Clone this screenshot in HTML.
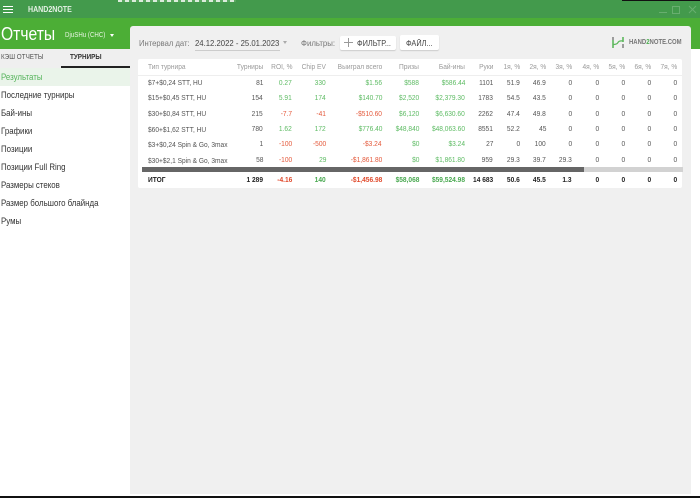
<!DOCTYPE html>
<html><head><meta charset="utf-8">
<style>
html,body{margin:0;padding:0;background:#fff;}
#p{position:relative;width:700px;height:498px;overflow:hidden;background:#fff;font-family:"Liberation Sans","Noto Sans CJK SC",sans-serif;color:#444;}
.a{position:absolute;white-space:nowrap;}
.s{transform-origin:0 50%;}
.c{position:absolute;white-space:nowrap;font-size:7.6px;line-height:10px;text-align:right;transform:scaleX(.87);transform-origin:100% 50%;}
.l{text-align:left;transform-origin:0 50%;left:148px;}
.h{color:#9a9a9a;}
.g{color:#5dbb63;}
.r{color:#e4593b;}
.d{color:#555;}
.b{font-weight:bold;color:#222;}
.bg{font-weight:bold;color:#48a84f;}
.br{font-weight:bold;color:#e04a2c;}
.n{position:absolute;left:1px;font-size:9px;line-height:12px;color:#333;white-space:nowrap;transform:scaleX(.875);transform-origin:0 50%;}
</style></head><body><div id="p">
<div class="a" style="left:0;top:0;width:700px;height:18px;background:#439a4c;"></div>
<div class="a" style="left:0;top:18px;width:700px;height:31px;background:#4cae36;"></div>
<div class="a" style="left:118px;top:0;width:118px;height:2px;background:repeating-linear-gradient(90deg,#dcecdc 0 4px,#5aa860 4px 7px);"></div>
<div class="a" style="left:622px;top:0;width:78px;height:1px;background:#111;"></div>
<div class="a" style="left:3px;top:6px;width:10px;height:1.4px;background:#fff;"></div>
<div class="a" style="left:3px;top:9px;width:10px;height:1.4px;background:#fff;"></div>
<div class="a" style="left:3px;top:12px;width:10px;height:1.4px;background:#fff;"></div>
<div class="a s" style="left:28px;top:4px;font-size:8px;line-height:11px;color:#e6f2e6;font-weight:bold;transform:scaleX(.88);">HAND2NOTE</div>
<div class="a" style="left:659px;top:12px;width:8px;height:1px;background:#68ae6f;"></div>
<div class="a" style="left:672px;top:6px;width:6px;height:6px;border:1px solid #68ae6f;"></div>
<svg class="a" style="left:688px;top:5px;" width="9" height="9"><path d="M1 1L8 8M8 1L1 8" stroke="#68ae6f" stroke-width="1" fill="none"/></svg>
<div class="a s" style="left:1px;top:24px;font-size:18px;line-height:20px;color:#fff;transform:scaleX(.87);">Отчеты</div>
<div class="a s" style="left:65px;top:30px;font-size:7.5px;line-height:10px;color:#e8f5e3;transform:scaleX(.82);">DjuSHu (CHC)</div>
<div class="a" style="left:110px;top:34px;width:0;height:0;border-left:2.5px solid transparent;border-right:2.5px solid transparent;border-top:3px solid #fff;"></div>
<div class="a" style="left:0;top:49px;width:130px;height:19px;background:#efefef;"></div>
<div class="a s" style="left:1px;top:52px;font-size:7.2px;line-height:10px;color:#555;transform:scaleX(.88);">КЭШ ОТЧЕТЫ</div>
<div class="a s" style="left:70px;top:52px;font-size:7.2px;line-height:10px;color:#333;font-weight:bold;transform:scaleX(.88);">ТУРНИРЫ</div>
<div class="a" style="left:61px;top:66px;width:69px;height:2px;background:#222;"></div>
<div class="a" style="left:0;top:68px;width:130px;height:18px;background:#eaf4ea;"></div>
<div class="n" style="top:71px;color:#58b55e;">Результаты</div>
<div class="n" style="top:89px;">Последние турниры</div>
<div class="n" style="top:107px;">Бай-ины</div>
<div class="n" style="top:125px;">Графики</div>
<div class="n" style="top:143px;">Позиции</div>
<div class="n" style="top:161px;">Позиции Full Ring</div>
<div class="n" style="top:179px;">Размеры стеков</div>
<div class="n" style="top:197px;">Размер большого блайнда</div>
<div class="n" style="top:215px;">Румы</div>
<div class="a" style="left:130px;top:26px;width:561px;height:468px;background:#f0f0f0;border-radius:3px 3px 0 0;"></div>
<div class="a s" style="left:139px;top:37px;font-size:8.5px;line-height:12px;color:#777;transform:scaleX(.9);">Интервал дат:</div>
<div class="a s" style="left:195px;top:37px;font-size:8.5px;line-height:12px;color:#444;transform:scaleX(.91);">24.12.2022 - 25.01.2023</div>
<div class="a" style="left:195px;top:50px;width:85px;height:1px;background:#ccc;"></div>
<div class="a" style="left:283px;top:41px;width:0;height:0;border-left:2.5px solid transparent;border-right:2.5px solid transparent;border-top:3px solid #aaa;"></div>
<div class="a s" style="left:301px;top:37px;font-size:8.5px;line-height:12px;color:#777;transform:scaleX(.92);">Фильтры:</div>
<div class="a" style="left:340px;top:36px;width:56px;height:14px;background:#fff;border-radius:2px;box-shadow:0 1px 1px #ccc;"></div>
<svg class="a" style="left:344px;top:38px;" width="9" height="9"><path d="M4.5 0V9M0 4.5H9" stroke="#999" stroke-width="1" fill="none"/></svg>
<div class="a s" style="left:357px;top:38px;font-size:8px;line-height:11px;color:#444;transform:scaleX(.92);">ФИЛЬТР...</div>
<div class="a" style="left:400px;top:35px;width:39px;height:15px;background:#fff;border-radius:2px;box-shadow:0 1px 1px #ccc;"></div>
<div class="a s" style="left:406px;top:38px;font-size:8px;line-height:11px;color:#444;transform:scaleX(.92);">ФАЙЛ...</div>
<svg class="a" style="left:611px;top:36px;" width="14" height="13"><path d="M2 1V4" stroke="#888" stroke-width="1.6" fill="none"/><path d="M2 4V12" stroke="#5cb85c" stroke-width="1.6" fill="none"/><path d="M12 1V6" stroke="#5cb85c" stroke-width="1.6" fill="none"/><path d="M12 8V12" stroke="#888" stroke-width="1.6" fill="none"/><path d="M2 8.5Q6 8.5 7 6.5T12 5" stroke="#5cb85c" stroke-width="1.3" fill="none"/></svg>
<div class="a s" style="left:629px;top:38px;font-size:7px;line-height:10px;font-weight:bold;color:#777;transform:scaleX(.85);">HAND<span style="color:#4cb050">2</span>NOTE.COM</div>
<div class="a" style="left:138px;top:59px;width:544px;height:129px;background:#fff;border-radius:2px;"></div>
<div class="a" style="left:138px;top:75px;width:544px;height:1px;background:#eee;"></div>
<div class="a" style="left:142px;top:167px;width:541px;height:5px;background:#d2d2d2;"></div>
<div class="a" style="left:142px;top:167px;width:442px;height:5px;background:#666;"></div>
<div id="t">
<div class="c h l" style="top:62px;">Тип турнира</div>
<div class="c h" style="right:437px;top:62px">Турниры</div><div class="c h" style="right:408px;top:62px">ROI, %</div><div class="c h" style="right:374px;top:62px">Chip EV</div><div class="c h" style="right:318px;top:62px">Выиграл всего</div><div class="c h" style="right:281px;top:62px">Призы</div><div class="c h" style="right:235px;top:62px">Бай-ины</div><div class="c h" style="right:207px;top:62px">Руки</div><div class="c h" style="right:180px;top:62px">1я, %</div><div class="c h" style="right:154px;top:62px">2я, %</div><div class="c h" style="right:128px;top:62px">3я, %</div><div class="c h" style="right:101px;top:62px">4я, %</div><div class="c h" style="right:75px;top:62px">5я, %</div><div class="c h" style="right:49px;top:62px">6я, %</div><div class="c h" style="right:23px;top:62px">7я, %</div>

<div class="c d l" style="top:78px;">$7+$0,24 STT, HU</div>
<div class="c d" style="right:437px;top:78px">81</div><div class="c g" style="right:408px;top:78px">0.27</div><div class="c g" style="right:374px;top:78px">330</div><div class="c g" style="right:318px;top:78px">$1.56</div><div class="c g" style="right:281px;top:78px">$588</div><div class="c g" style="right:235px;top:78px">$586.44</div><div class="c d" style="right:207px;top:78px">1101</div><div class="c d" style="right:180px;top:78px">51.9</div><div class="c d" style="right:154px;top:78px">46.9</div><div class="c d" style="right:128px;top:78px">0</div><div class="c d" style="right:101px;top:78px">0</div><div class="c d" style="right:75px;top:78px">0</div><div class="c d" style="right:49px;top:78px">0</div><div class="c d" style="right:23px;top:78px">0</div>

<div class="c d l" style="top:93px;">$15+$0,45 STT, HU</div>
<div class="c d" style="right:437px;top:93px">154</div><div class="c g" style="right:408px;top:93px">5.91</div><div class="c g" style="right:374px;top:93px">174</div><div class="c g" style="right:318px;top:93px">$140.70</div><div class="c g" style="right:281px;top:93px">$2,520</div><div class="c g" style="right:235px;top:93px">$2,379.30</div><div class="c d" style="right:207px;top:93px">1783</div><div class="c d" style="right:180px;top:93px">54.5</div><div class="c d" style="right:154px;top:93px">43.5</div><div class="c d" style="right:128px;top:93px">0</div><div class="c d" style="right:101px;top:93px">0</div><div class="c d" style="right:75px;top:93px">0</div><div class="c d" style="right:49px;top:93px">0</div><div class="c d" style="right:23px;top:93px">0</div>

<div class="c d l" style="top:109px;">$30+$0,84 STT, HU</div>
<div class="c d" style="right:437px;top:109px">215</div><div class="c r" style="right:408px;top:109px">-7.7</div><div class="c r" style="right:374px;top:109px">-41</div><div class="c r" style="right:318px;top:109px">-$510.60</div><div class="c g" style="right:281px;top:109px">$6,120</div><div class="c g" style="right:235px;top:109px">$6,630.60</div><div class="c d" style="right:207px;top:109px">2262</div><div class="c d" style="right:180px;top:109px">47.4</div><div class="c d" style="right:154px;top:109px">49.8</div><div class="c d" style="right:128px;top:109px">0</div><div class="c d" style="right:101px;top:109px">0</div><div class="c d" style="right:75px;top:109px">0</div><div class="c d" style="right:49px;top:109px">0</div><div class="c d" style="right:23px;top:109px">0</div>

<div class="c d l" style="top:125px;">$60+$1,62 STT, HU</div>
<div class="c d" style="right:437px;top:124px">780</div><div class="c g" style="right:408px;top:124px">1.62</div><div class="c g" style="right:374px;top:124px">172</div><div class="c g" style="right:318px;top:124px">$776.40</div><div class="c g" style="right:281px;top:124px">$48,840</div><div class="c g" style="right:235px;top:124px">$48,063.60</div><div class="c d" style="right:207px;top:124px">8551</div><div class="c d" style="right:180px;top:124px">52.2</div><div class="c d" style="right:154px;top:124px">45</div><div class="c d" style="right:128px;top:124px">0</div><div class="c d" style="right:101px;top:124px">0</div><div class="c d" style="right:75px;top:124px">0</div><div class="c d" style="right:49px;top:124px">0</div><div class="c d" style="right:23px;top:124px">0</div>

<div class="c d l" style="top:140px;">$3+$0,24 Spin &amp; Go, 3max</div>
<div class="c d" style="right:437px;top:139px">1</div><div class="c r" style="right:408px;top:139px">-100</div><div class="c r" style="right:374px;top:139px">-500</div><div class="c r" style="right:318px;top:139px">-$3.24</div><div class="c g" style="right:281px;top:139px">$0</div><div class="c g" style="right:235px;top:139px">$3.24</div><div class="c d" style="right:207px;top:139px">27</div><div class="c d" style="right:180px;top:139px">0</div><div class="c d" style="right:154px;top:139px">100</div><div class="c d" style="right:128px;top:139px">0</div><div class="c d" style="right:101px;top:139px">0</div><div class="c d" style="right:75px;top:139px">0</div><div class="c d" style="right:49px;top:139px">0</div><div class="c d" style="right:23px;top:139px">0</div>

<div class="c d l" style="top:156px;">$30+$2,1 Spin &amp; Go, 3max</div>
<div class="c d" style="right:437px;top:155px">58</div><div class="c r" style="right:408px;top:155px">-100</div><div class="c g" style="right:374px;top:155px">29</div><div class="c r" style="right:318px;top:155px">-$1,861.80</div><div class="c g" style="right:281px;top:155px">$0</div><div class="c g" style="right:235px;top:155px">$1,861.80</div><div class="c d" style="right:207px;top:155px">959</div><div class="c d" style="right:180px;top:155px">29.3</div><div class="c d" style="right:154px;top:155px">39.7</div><div class="c d" style="right:128px;top:155px">29.3</div><div class="c d" style="right:101px;top:155px">0</div><div class="c d" style="right:75px;top:155px">0</div><div class="c d" style="right:49px;top:155px">0</div><div class="c d" style="right:23px;top:155px">0</div>

<div class="c b l" style="top:175px;">ИТОГ</div>
<div class="c b" style="right:437px;top:175px">1 289</div><div class="c br" style="right:408px;top:175px">-4.16</div><div class="c bg" style="right:374px;top:175px">140</div><div class="c br" style="right:318px;top:175px">-$1,456.98</div><div class="c bg" style="right:281px;top:175px">$58,068</div><div class="c bg" style="right:235px;top:175px">$59,524.98</div><div class="c b" style="right:207px;top:175px">14 683</div><div class="c b" style="right:180px;top:175px">50.6</div><div class="c b" style="right:154px;top:175px">45.5</div><div class="c b" style="right:128px;top:175px">1.3</div><div class="c b" style="right:101px;top:175px">0</div><div class="c b" style="right:75px;top:175px">0</div><div class="c b" style="right:49px;top:175px">0</div><div class="c b" style="right:23px;top:175px">0</div>
</div>
<div class="a" style="left:0;top:496px;width:700px;height:2px;background:#111;"></div>
</div></body></html>
